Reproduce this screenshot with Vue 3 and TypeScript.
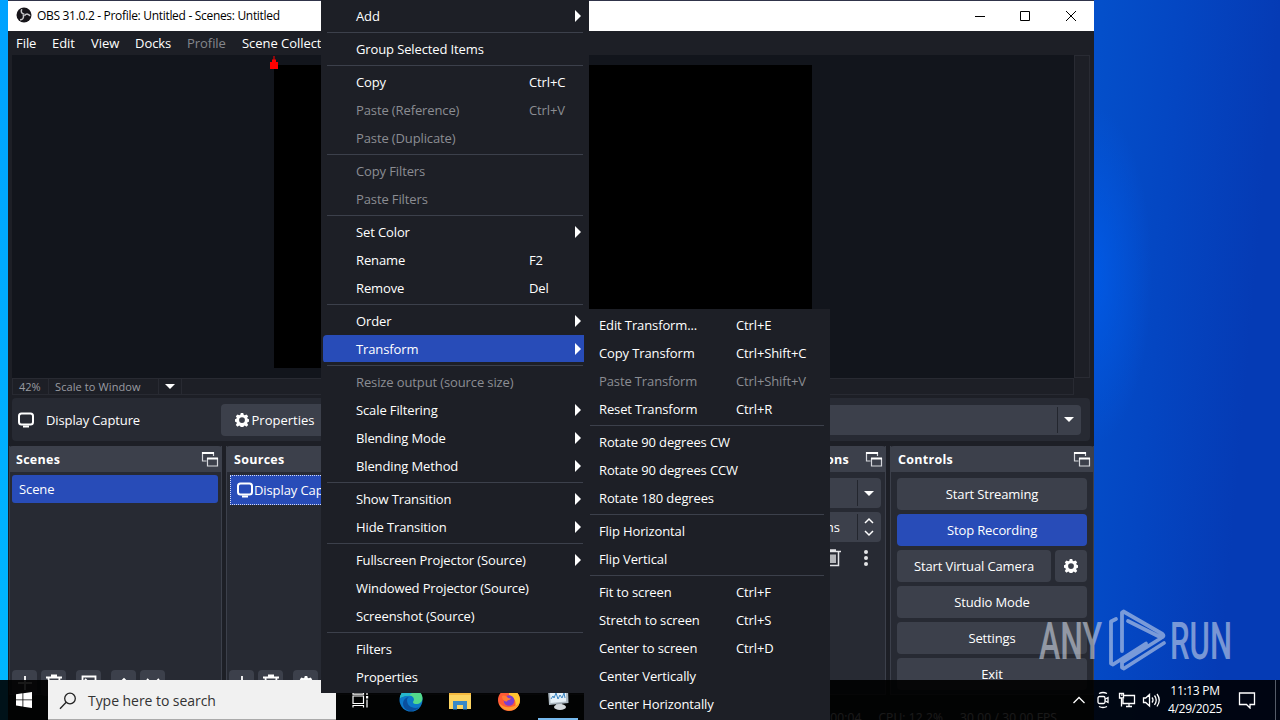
<script setup lang="ts">
interface Entry {
  label?: string
  keys?: string
  off?: boolean
  sub?: boolean
  active?: boolean
  sep?: boolean
}

const sep: Entry = { sep: true }

const sourceMenu: Entry[] = [
  { label: 'Add', sub: true }, sep,
  { label: 'Group Selected Items' }, sep,
  { label: 'Copy', keys: 'Ctrl+C' },
  { label: 'Paste (Reference)', keys: 'Ctrl+V', off: true },
  { label: 'Paste (Duplicate)', off: true }, sep,
  { label: 'Copy Filters', off: true },
  { label: 'Paste Filters', off: true }, sep,
  { label: 'Set Color', sub: true },
  { label: 'Rename', keys: 'F2' },
  { label: 'Remove', keys: 'Del' }, sep,
  { label: 'Order', sub: true },
  { label: 'Transform', sub: true, active: true }, sep,
  { label: 'Resize output (source size)', off: true },
  { label: 'Scale Filtering', sub: true },
  { label: 'Blending Mode', sub: true },
  { label: 'Blending Method', sub: true }, sep,
  { label: 'Show Transition', sub: true },
  { label: 'Hide Transition', sub: true }, sep,
  { label: 'Fullscreen Projector (Source)', sub: true },
  { label: 'Windowed Projector (Source)' },
  { label: 'Screenshot (Source)' }, sep,
  { label: 'Filters' },
  { label: 'Properties' },
]

const transformMenu: Entry[] = [
  { label: 'Edit Transform...', keys: 'Ctrl+E' },
  { label: 'Copy Transform', keys: 'Ctrl+Shift+C' },
  { label: 'Paste Transform', keys: 'Ctrl+Shift+V', off: true },
  { label: 'Reset Transform', keys: 'Ctrl+R' }, sep,
  { label: 'Rotate 90 degrees CW' },
  { label: 'Rotate 90 degrees CCW' },
  { label: 'Rotate 180 degrees' }, sep,
  { label: 'Flip Horizontal' },
  { label: 'Flip Vertical' }, sep,
  { label: 'Fit to screen', keys: 'Ctrl+F' },
  { label: 'Stretch to screen', keys: 'Ctrl+S' },
  { label: 'Center to screen', keys: 'Ctrl+D' },
  { label: 'Center Vertically' },
  { label: 'Center Horizontally' },
]

const gear =
  'M6.6 0h2.8l.5 2.1 1.3.6 1.9-1.1 2 2-1.2 1.8.6 1.3 2 .5v2.6l-2 .6-.6 1.3 1.2 1.9-2 2-1.9-1.2-1.3.6-.5 2H6.6l-.5-2-1.3-.6-1.9 1.2-2-2 1.2-1.9-.6-1.3-2-.6V7.200l2-.5.6-1.300L.9 3.600l2-2 1.900 1.100 1.300-.6zM8 4.800a3.300 3.300 0 1 0 0 6.600 3.300 3.300 0 0 0 0-6.600z'
</script>

<template>
  <div class="desktop">
    <div class="window">
      <header class="title">
        <svg class="logo" viewBox="0 0 16 16">
          <circle cx="8" cy="8" r="7.500" fill="#17151a" />
          <g fill="none" stroke="#c9c9cc" stroke-width="1.500">
            <path d="M8.400 7.300C5.200 6.800 4.500 4 6 2.300" />
            <path d="M8.400 7.300C5.200 6.800 4.500 4 6 2.300" transform="rotate(120 8 8)" />
            <path d="M8.400 7.300C5.200 6.800 4.500 4 6 2.300" transform="rotate(240 8 8)" />
          </g>
        </svg>
        <span class="caption">OBS 31.0.2 - Profile: Untitled - Scenes: Untitled</span>
        <svg class="winbtns" viewBox="0 0 110 12" fill="none" stroke="#000">
          <path d="M1 6.500h10M46.500 1.500h9v9h-9zM92 1l10 10M102 1L92 11" />
        </svg>
      </header>
      <nav class="menubar">
        <span class="m-file">File</span><span class="m-edit">Edit</span><span class="m-view">View</span>
        <span class="m-docks">Docks</span><span class="m-prof">Profile</span><span class="m-coll">Scene Collection</span>
      </nav>
      <div class="stage">
        <div class="preview">
          <div class="canvas"></div>
          <svg class="handle" viewBox="0 0 10 14"><path d="M1 6h8v7H1zM3 3.500h4V6H3zM4.500 0h1v4h-1z" fill="#f00" /></svg>
        </div>
        <div class="vscroll"></div>
      </div>
      <div class="zoombar">
        <span class="pct">42%</span><span class="mode">Scale to Window</span>
        <span class="drop"><i class="caret"></i></span>
      </div>
      <div class="context">
        <svg class="screen" viewBox="0 0 18 16"><rect x="2" y="1.500" width="14" height="11" rx="2.500" /><path d="M6 14.500h6" /></svg>
        <span class="name">Display Capture</span>
        <span class="btn props">
          <svg class="gear" viewBox="0 0 16 16"><path :d="gear" fill-rule="evenodd" /></svg>Properties
        </span>
        <span class="btn combo"><span class="cell"><i class="caret"></i></span></span>
      </div>
      <div class="docks">
        <section class="dock scenes">
          <h2>Scenes<svg class="float" viewBox="0 0 18 18"><path d="M5.500 11H1.500V2.500h11V6M6.500 8.500h10V16h-10z" /><path class="bar" d="M1 3h12M6 8.500h11" /></svg></h2>
          <div class="row">Scene</div>
          <div class="tools">
            <b><svg viewBox="0 0 18 18"><path d="M9 2v14M2 9h14" /></svg></b>
            <b><svg viewBox="0 0 18 18"><path d="M1 3.500h16M6 1.500h6M3.500 4l1 12h9l1-12M7 6v8M9 6v8M11 6v8" /></svg></b>
            <b class="gap"><svg viewBox="0 0 18 18"><path d="M2.500 2.500h13v13h-13zM5 5l7 7M5 8l4 5" /></svg></b>
            <b class="gap"><svg viewBox="0 0 18 18"><path d="M3 11l6-6 6 6" /></svg></b>
            <b><svg viewBox="0 0 18 18"><path d="M3 5l6 6 6-6" /></svg></b>
          </div>
        </section>
        <section class="dock sources">
          <h2>Sources</h2>
          <div class="row focus"><svg class="screen" viewBox="0 0 18 16"><rect x="2" y="1.500" width="14" height="11" rx="2.500" /><path d="M6 14.500h6" /></svg>Display Capture</div>
          <div class="tools">
            <b><svg viewBox="0 0 18 18"><path d="M9 2v14M2 9h14" /></svg></b>
            <b><svg viewBox="0 0 18 18"><path d="M1 3.500h16M6 1.500h6M3.500 4l1 12h9l1-12M7 6v8M9 6v8M11 6v8" /></svg></b>
            <b class="gap"><svg class="gear" viewBox="0 0 16 16"><path :d="gear" fill-rule="evenodd" /></svg></b>
          </div>
        </section>
        <section class="dock transitions">
          <h2><span class="end">Scene Transitions</span><svg class="float" viewBox="0 0 18 18"><path d="M5.500 11H1.500V2.500h11V6M6.500 8.500h10V16h-10z" /><path class="bar" d="M1 3h12M6 8.500h11" /></svg></h2>
          <div class="field"><span class="cell"><i class="caret"></i></span></div>
          <div class="field second"><span class="ms">300 ms</span>
            <span class="cell"><svg class="spin" viewBox="0 0 12 22"><path d="M2 7l4-4 4 4M2 15l4 4 4-4" /></svg></span>
          </div>
          <div class="acts">
            <svg class="trash" viewBox="0 0 18 18"><path d="M1 2.500h16M6 1h6M3.500 3v13.500h11V3M7 5.500v8.500M9 5.500v8.500M11 5.500v8.500" /></svg>
            <svg class="dots" viewBox="0 0 6 18"><circle cx="3" cy="3" r="2" /><circle cx="3" cy="9" r="2" /><circle cx="3" cy="15" r="2" /></svg>
          </div>
        </section>
        <section class="dock controls">
          <h2>Controls<svg class="float" viewBox="0 0 18 18"><path d="M5.500 11H1.500V2.500h11V6M6.500 8.500h10V16h-10z" /><path class="bar" d="M1 3h12M6 8.500h11" /></svg></h2>
          <div class="stack">
            <span class="btn">Start Streaming</span>
            <span class="btn on">Stop Recording</span>
            <div class="pair">
              <span class="btn">Start Virtual Camera</span>
              <span class="btn"><svg class="gear" viewBox="0 0 16 16"><path :d="gear" fill-rule="evenodd" /></svg></span>
            </div>
            <span class="btn">Studio Mode</span>
            <span class="btn">Settings</span>
            <span class="btn">Exit</span>
          </div>
        </section>
      </div>
      <footer class="status"><span>00:00:04</span><span>CPU: 12.2%</span><span>30.00 / 30.00 FPS</span></footer>
    </div>

    <svg class="brand" viewBox="0 0 200 70">
      <text x="3" y="54" textLength="63" lengthAdjust="spacingAndGlyphs">ANY</text>
      <text x="134" y="54" textLength="62" lengthAdjust="spacingAndGlyphs">RUN</text>
      <path d="M80 14l-5 2.500v42l2 1 33-21M86 46V7.500l1.500-1 39 22.500c2 2 0 4-2.500 3l-32-16M128 38l-40 25.500-2-1v-5l40-25" />
    </svg>

    <div class="taskbar">
      <svg class="start" viewBox="0 0 16 16"><path d="M0 2.200l6.500-.9v6.200H0zM7.300 1.200L16 0v7.500H7.300zM0 8.300h6.500v6.200L0 13.600zM7.300 8.300H16V16l-8.700-1.200z" fill="#fff" /></svg>
      <div class="search">
        <svg viewBox="0 0 18 18"><circle cx="11" cy="6.500" r="5.300" /><path d="M7.200 10.300L1 16.800" /></svg>
        <span>Type here to search</span>
      </div>
      <div class="apps">
        <svg class="task" viewBox="0 0 18 18" fill="none" stroke="#fff" stroke-width="1.200"><path d="M1 5h10.500v7.500H1zM1 1v2.200h10.500V1M1 16.500v-2h10.500v2M15 1v3M15 8.500v8" /><path d="M14 5h2.200v2.500H14z" fill="#fff" stroke="none" /></svg>
        <svg viewBox="0 0 24 24">
          <circle cx="12" cy="12" r="11.500" fill="#0c78c9" />
          <path d="M1 10C2 3 8 .5 12 .5c7 0 11.500 5 11.500 9.500 0 4-3 6-6 6-3.500 0-4-1.500-3-3 1.500-2-.5-5.500-4.500-5.500C5 7.500 2 9 1 10z" fill="#52d98c" />
          <path d="M1 10C2 3 8 .5 12 .5c2 0 3 1 3 3L10 7.500C5 7.500 2 9 1 10z" fill="#25b7cf" />
          <path d="M8 12c0 6 5 9 12 7.500-5 5.500-15 4.500-16-3.500C4 12 7 9 10 9c-1 .5-2 1.500-2 3z" fill="#0a4f9e" />
        </svg>
        <svg viewBox="0 0 24 24">
          <path d="M1 3h8l2 2h12v16H1z" fill="#f5b93e" /><path d="M1 7h22v14H1z" fill="#fcd462" />
          <path d="M5 13h14v8.500h-4V17H9v4.500H5z" fill="#3889c9" />
        </svg>
        <svg viewBox="0 0 24 24">
          <circle cx="12" cy="12" r="11" fill="#ff5a36" />
          <path d="M12 1c7 1 11 5 11 11 0 4-2 7-5 9 2-8-1-12-6-14z" fill="#ffc531" />
          <path d="M2 15c2 6 8 9 14 7 3-1 5-4 6-7-4 5-15 6-20 0z" fill="#ff9a2e" />
          <circle cx="12" cy="12.500" r="5.300" fill="#7b3fd0" />
          <path d="M5 8c3-1 5 0 6 2l3 .5c-1 2-4 1.500-4 3-3 0-5-2-5-5.500z" fill="#ff7a35" />
        </svg>
        <span class="running">
          <svg viewBox="0 0 24 24">
            <path d="M2 3l20-1 .5 14L3 18z" fill="#aebac3" /><path d="M4 4l16-1v11.500L4.500 16z" fill="#e6f0f7" />
            <path d="M5 12l2-3 1 2 2-5 2 6 2-4 2 3 2-5 1 5" fill="none" stroke="#3b86c4" />
            <path d="M10 16h6v3h-6z" fill="#9da7b0" /><ellipse cx="14" cy="20" rx="6" ry="3" fill="#d4d9dd" />
          </svg>
        </span>
      </div>
      <div class="tray">
        <svg viewBox="0 0 18 18"><path d="M3.500 12L9 6.500l5.500 5.500" /></svg>
        <svg viewBox="0 0 18 18"><rect x="4" y="5.500" width="7" height="7" rx="1.500" /><path d="M11 8.200L14 6.500v5l-3-1.700M5 2.500q4-2 8 0M5 15.500q4 2 8 0" /></svg>
        <svg viewBox="0 0 18 18"><path d="M6 4.500h10.500v8H5V8M8 15.500h6M11 12.500v3M1.500 2.500h4V7h-4zM3.500 7v8.500M3 4.200h1.500" /></svg>
        <svg viewBox="0 0 18 18"><path d="M1.500 7v4.500h2.200L7.500 15V3.500L3.700 7zM10 6.500q2 2.500 0 5M12.500 4.500q3.500 4.500 0 9.500M15 3q4.500 6 0 12.500" /></svg>
        <div class="clock"><span>11:13 PM</span><span>4/29/2025</span></div>
        <svg class="note" viewBox="0 0 18 18"><path d="M1.500 2h15v11.500h-4.500V17l-3.500-3.500h-7z" /></svg>
        <i class="peek"></i>
      </div>
    </div>

    <div class="menu main">
      <template v-for="(e, i) in sourceMenu" :key="i">
        <hr v-if="e.sep" />
        <div v-else class="item" :class="{ off: e.off, active: e.active }">
          <span class="label">{{ e.label }}</span><span class="keys">{{ e.keys }}</span><i v-if="e.sub" class="arrow"></i>
        </div>
      </template>
    </div>
    <div class="menu transform">
      <template v-for="(e, i) in transformMenu" :key="i">
        <hr v-if="e.sep" />
        <div v-else class="item" :class="{ off: e.off }">
          <span class="label">{{ e.label }}</span><span class="keys">{{ e.keys }}</span>
        </div>
      </template>
    </div>
  </div>
</template>

<style>
body { margin: 0; overflow: hidden; }
</style>

<style scoped>
* { box-sizing: border-box; }
.desktop {
  position: relative; width: 1280px; height: 720px; overflow: hidden;
  background: linear-gradient(#00a2ff, #00b8ff) 0 0 / 8px 100% no-repeat,
    radial-gradient(ellipse 60px 170px at 1092px 275px, rgba(0, 92, 235, .8), transparent),
    linear-gradient(95deg, #0450cb 1090px, #0446c2 1180px, #053bb5 1275px);
  font: 13px "Open Sans", "Noto Sans", sans-serif; color: #fff; white-space: nowrap;
}
.window {
  position: absolute; left: 8px; top: 0; width: 1086px; height: 730px; overflow: hidden;
  background: #1d1f26; border-top: 1px solid #30344a; display: flex; flex-direction: column;
}
.title { height: 30px; flex: none; background: #fff; color: #000; display: flex; align-items: center; padding-left: 8px; }
.logo { width: 16px; height: 16px; margin-top: -2px; }
.caption { font-size: 12px; letter-spacing: -.31px; margin: -1px 0 0 5px; flex: 1; }
.winbtns { width: 110px; height: 12px; margin-right: 10px; margin-top: -1px; }
.menubar { height: 24px; flex: none; display: flex; align-items: center; padding-left: 8px; letter-spacing: -.05px; }
.m-file { width: 36px; } .m-edit { width: 39px; } .m-view { width: 44px; } .m-docks { width: 52px; }
.m-prof { width: 55px; color: #85878d; }
.stage { height: 323px; flex: none; display: flex; padding-left: 4px; }
.preview { position: relative; width: 1062px; background: #12151c; padding: 10px 0 0 262px; }
.canvas { width: 538px; height: 303px; background: #000; }
.handle { position: absolute; left: 257px; top: 1px; width: 10px; height: 14px; }
.vscroll { width: 16px; border: 1px solid #292b33; }
.zoombar { height: 17px; flex: none; margin: 0 20px 0 4px; border: 1px solid #282a32; display: flex; align-items: center; font-size: 11px; color: #9a9ca2; }
.pct { width: 36px; padding-left: 6px; border-right: 1px solid #282a32; }
.mode { width: 110px; padding-left: 6px; letter-spacing: .1px; border-right: 1px solid #282a32; }
.drop { width: 23px; display: flex; justify-content: center; border-right: 1px solid #282a32; height: 15px; align-items: center; }
.caret { border: 5px solid transparent; border-top-color: #fff; border-bottom: 0; margin-right: 1px; }
.context { height: 43px; flex: none; margin: 3px 4px 5px; background: #272a33; border-radius: 4px; display: flex; align-items: center; padding: 0 9px 0 5px; }
.screen { width: 18px; height: 16px; fill: none; stroke: #fff; stroke-width: 2; flex: none; }
.name { margin-left: 11px; width: 175px; letter-spacing: -.12px; }
.btn { background: #3c404b; border-radius: 4px; display: flex; align-items: center; justify-content: center; }
.gear { width: 14px; height: 14px; fill: #fff; }
.props { width: 107px; height: 32px; gap: 3px; }
.combo { margin-left: auto; width: 300px; height: 30px; justify-content: flex-end; }
.cell { width: 24px; height: 26px; border-left: 1px solid #23262e; display: flex; align-items: center; justify-content: center; }
.docks { flex: none; height: 249px; display: flex; padding-left: 1px; gap: 4px; }
.dock { background: #272a33; border: 1px solid #3c404b; border-top: 0; position: relative; display: flex; flex-direction: column; }
.dock h2 { margin: 0 -1px; height: 26px; flex: none; background: #3c404b; border-radius: 4px 4px 0 0; font-size: 12.500px; letter-spacing: .28px; font-weight: 700; display: flex; align-items: center; justify-content: space-between; padding: 0 3px 0 8px; }
.dock.scenes h2 { padding-left: 7px; }
.float { width: 18px; height: 18px; fill: none; stroke: #d5d7dc; stroke-width: 1.200; }
.float .bar { stroke: #fff; stroke-width: 2; }
.scenes { width: 213px; } .sources { width: 318px; } .transitions { width: 338px; } .controls { width: 204px; }
.row { margin: 3px 3px 0 2px; height: 28px; flex: none; background: #284cb8; border-radius: 3px; display: flex; align-items: center; padding-left: 7px; letter-spacing: -.1px; }
.focus { height: 30px; margin: 3px 2px 0 3px; border: 1px dotted #d0d8f4; border-radius: 0; padding-left: 5px; }
.tools { display: flex; gap: 4px; margin-top: auto; padding: 0 2px; height: 24px; }
.tools b { width: 25px; height: 26px; background: #3c404b; border-radius: 4px; display: flex; align-items: center; justify-content: center; }
.tools .gap { margin-left: 6px; }
.tools svg { width: 18px; height: 18px; fill: none; stroke: #fff; stroke-width: 1.800; }
.tools .gear { fill: #fff; stroke: none; width: 14px; height: 14px; }
.end { margin-left: auto; margin-right: 16px; }
.field { margin: 6px 4px 0 100px; height: 30px; background: #3c404b; border-radius: 4px; display: flex; align-items: center; justify-content: flex-end; }
.field.second { margin-top: 4px; }
.ms { margin-right: 17px; }
.spin { width: 12px; height: 22px; fill: none; stroke: #fff; stroke-width: 1.500; margin-right: 1px; }
.acts { display: flex; justify-content: flex-end; gap: 21px; padding: 7px 16px 0 0; }
.acts svg { height: 18px; } .trash { width: 18px; fill: none; stroke: #e3e4e7; stroke-width: 1.500; } .dots { width: 6px; fill: #e3e4e7; }
.stack { display: flex; flex-direction: column; gap: 4px; padding: 6px 6px 0; letter-spacing: -.12px; }
.stack .btn { height: 32px; flex: none; }
.stack .on { background: #284cb8; }
.pair { display: flex; gap: 4px; } .pair .btn { width: 154px; } .pair .btn + .btn { width: 32px; }
.status { flex: none; height: 26px; margin-top: 9px; display: flex; gap: 17px; padding-left: 805px; align-items: center; font-size: 12px; letter-spacing: .12px; }

.brand { position: absolute; left: 1036px; top: 605px; width: 200px; height: 70px; opacity: .55; }
.brand text { font: 500 52px Roboto, sans-serif; fill: #d9e1ee; }
.brand path { fill: none; stroke: #d9e1ee; stroke-width: 3.800; stroke-linejoin: round; stroke-linecap: round; }

.taskbar { position: absolute; left: 0; bottom: 0; width: 1280px; height: 40px; background: rgba(0, 0, 0, .9); display: flex; align-items: center; }
.start { width: 16px; height: 16px; margin: 0 16px; }
.search { width: 288px; height: 40px; background: #f1f1f1; border-bottom: 1px solid #aaa; color: #333; display: flex; align-items: center; padding: 2px 0 0 11px; font-size: 14px; letter-spacing: -.05px; }
.search svg { width: 18px; height: 18px; fill: none; stroke: #222; stroke-width: 1.300; margin-right: 11px; }
.apps { display: flex; align-items: center; }
.apps svg { width: 24px; height: 24px; margin-left: 25px; flex: none; }
.apps .task { width: 18px; height: 18px; margin: 0 20px 0 16px; }
.apps .task + svg { margin-left: 9px; }
.running { width: 40px; height: 40px; margin-left: 17px; border-bottom: 2px solid #76b9ed; display: flex; align-items: center; }
.running svg { margin-left: 8px; }
.tray { margin-left: auto; display: flex; align-items: center; }
.tray svg { width: 18px; height: 18px; margin-right: 6px; fill: none; stroke: #fff; stroke-width: 1.300; }
.clock { width: 64px; height: 36px; display: flex; flex-direction: column; align-items: center; font-size: 12px; line-height: 18px; letter-spacing: -.3px; margin: 0 11px 0 -3px; }
.tray .note { margin-right: 19px; }
.peek { width: 5px; height: 40px; border-left: 1px solid #555c68; }

.menu { position: absolute; background: #1d1f26; letter-spacing: -.12px; }
.main { left: 321px; top: 0; width: 268px; height: 693px; padding: 2px 5px 0 2px; }
.transform { left: 584px; top: 309px; width: 246px; height: 420px; padding: 2px 5px 0 0; }
.item { height: 28px; display: flex; align-items: center; padding-left: 33px; }
.label { width: 173px; }
.keys { flex: 1; }
.off { color: #8b8d93; }
.active { background: linear-gradient(#284cb8, #284cb8) 0 0 / 100% 27px no-repeat; border-radius: 4px 0 0 4px; }
.arrow { border: 6px solid transparent; border-left-color: #fff; border-right: 0; margin-right: 3px; }
.menu hr { margin: 2px 1px 2px 4px; border: 0; height: 1px; background: #3c404b; }
.transform .item { padding-left: 15px; }
.transform .label { width: 137px; }
.transform hr { margin-left: 6px; }
</style>
